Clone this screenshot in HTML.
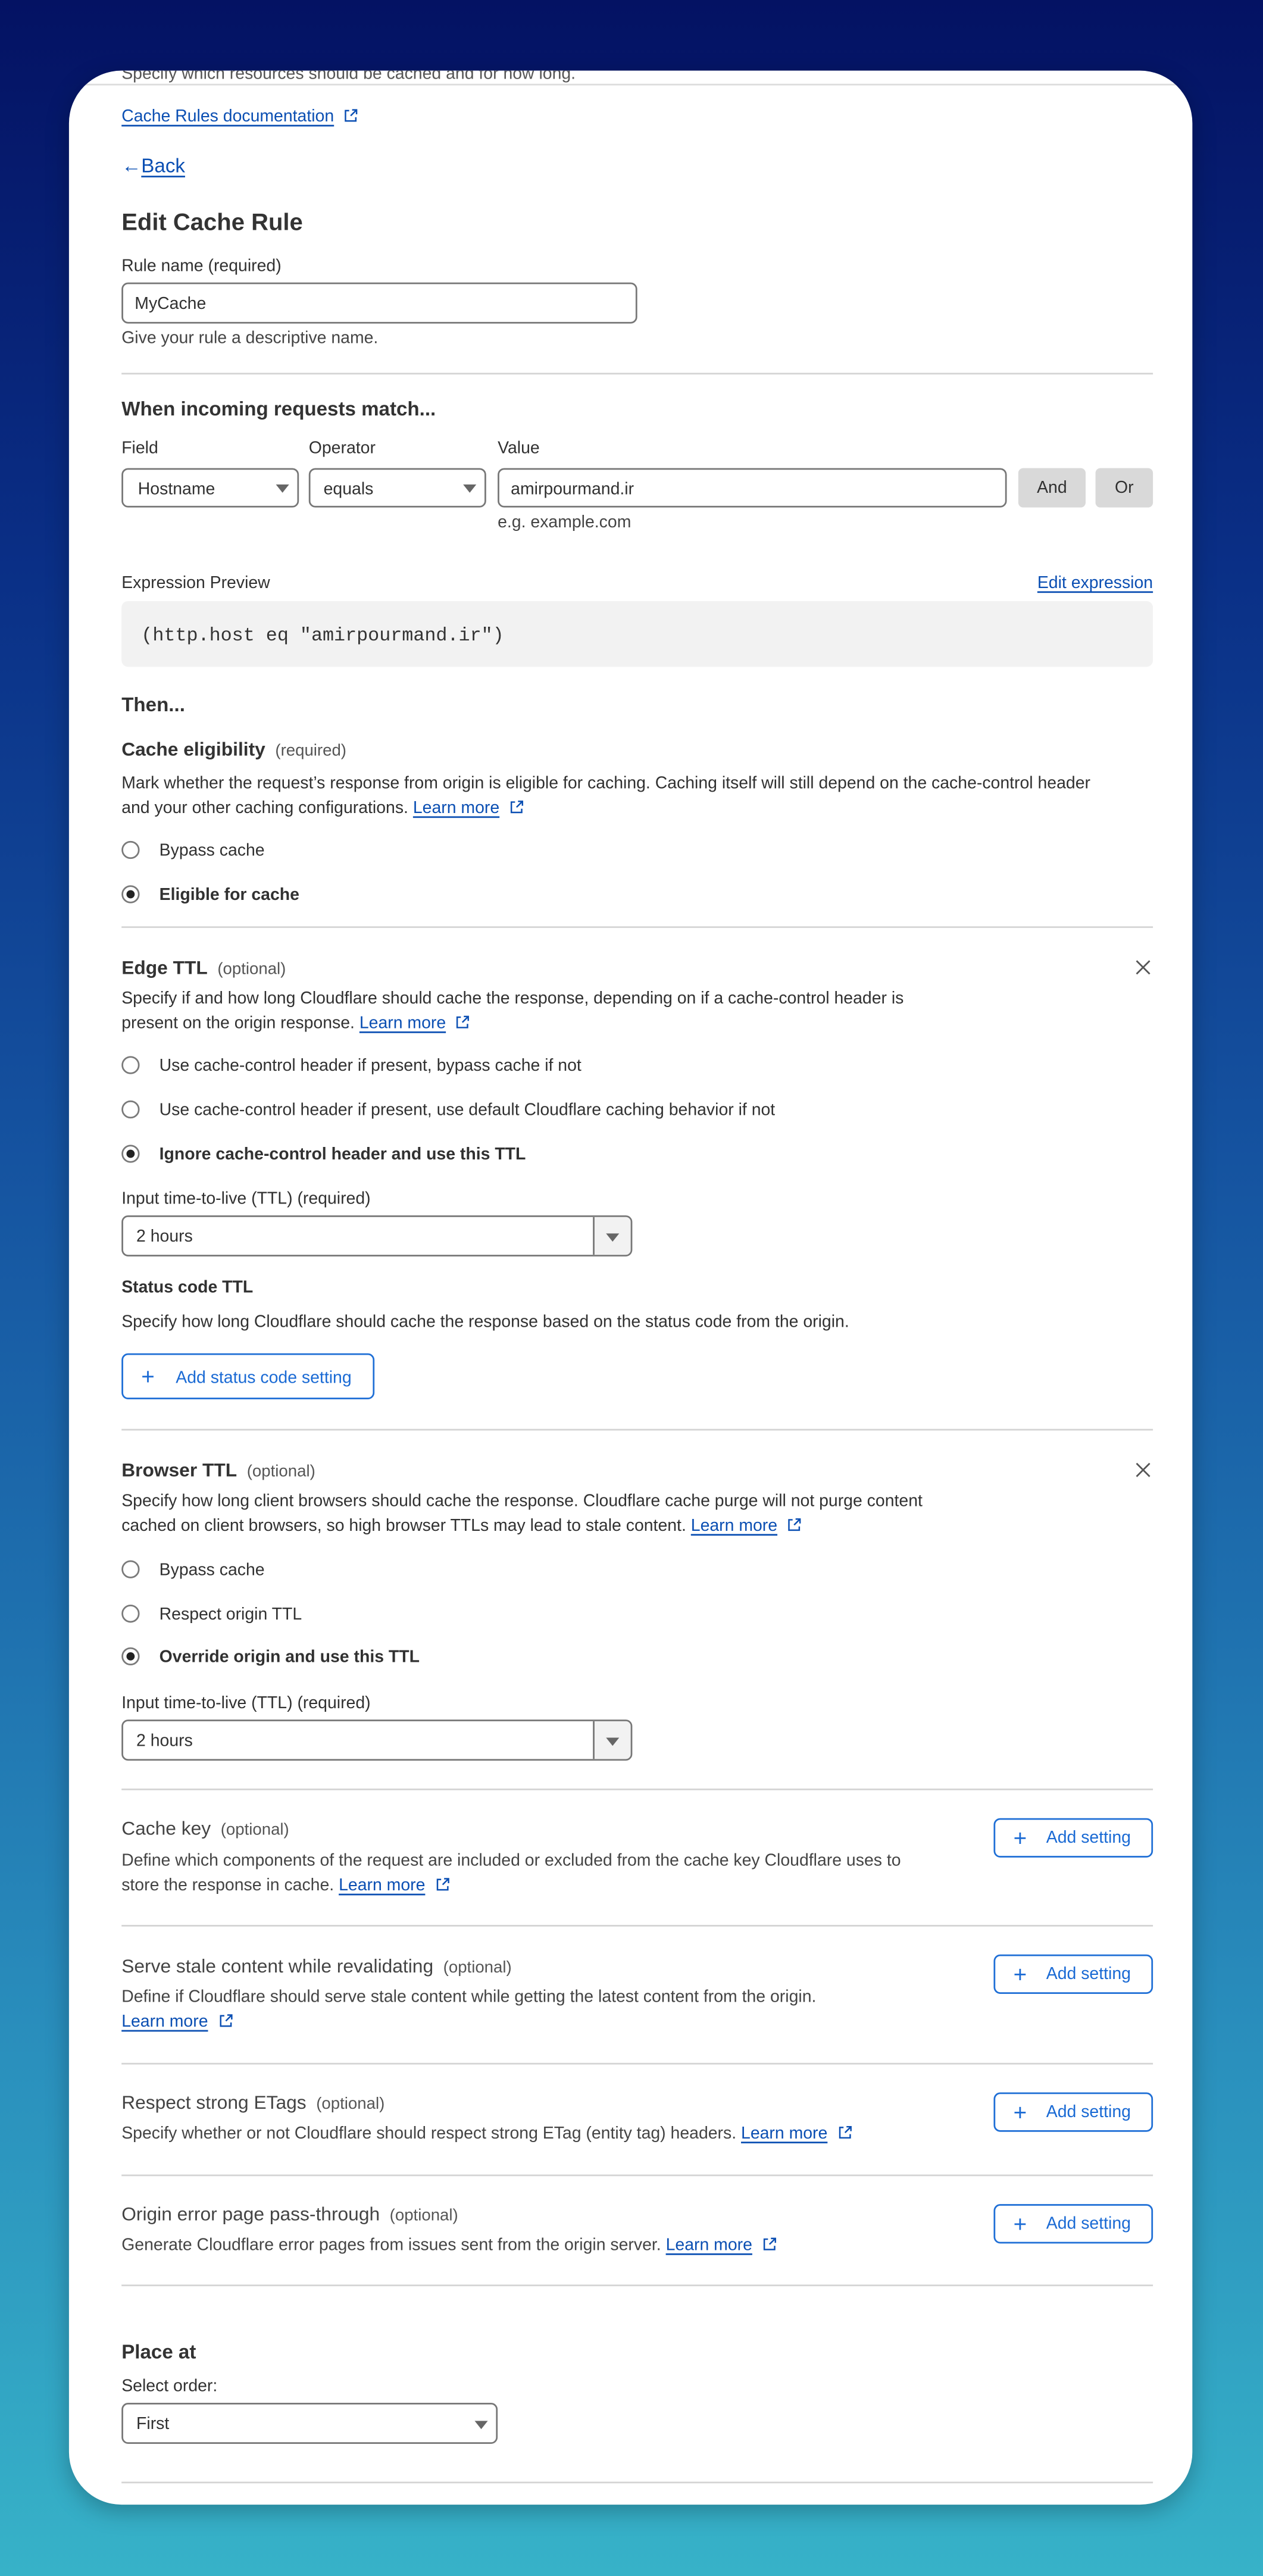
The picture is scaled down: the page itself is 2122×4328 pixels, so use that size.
<!DOCTYPE html>
<html><head><meta charset="utf-8"><style>
*{margin:0;padding:0;box-sizing:border-box}
html,body{width:2122px;height:4328px;overflow:hidden}
body{background:linear-gradient(180deg,#041263 0%,#0a2f86 22%,#1553a0 45%,#1e6fae 62%,#2a90bd 80%,#37b2c8 100%);font-family:"Liberation Sans",sans-serif;color:#313131}
#s{position:absolute;left:0;top:0;width:769px;height:1568.5px;transform:scale(2.75943);transform-origin:0 0}
.card{position:absolute;left:42px;top:43px;width:684px;height:1482px;background:#fff;border-radius:32px;box-shadow:0 4px 14px rgba(0,0,0,.25);overflow:hidden}
.a{position:absolute;white-space:nowrap;line-height:16px;height:16px;margin-top:2px}
.t{font-size:10.3px}
.lnk{color:#0b4fb3;text-decoration:underline;text-underline-offset:2px}
.h{font-size:12px;font-weight:bold;color:#333}
.opt{font-size:10px;font-weight:normal;color:#555;margin-left:6px}
.hr{position:absolute;left:32px;width:628px;height:1px;background:#d4d4d4}
.box{position:absolute;border:1px solid #777;border-radius:4px;background:#fff}
.val{position:absolute;font-size:10.3px;line-height:16px;top:50%;margin-top:-6.5px}
.arr{position:absolute;width:0;height:0;border-left:4px solid transparent;border-right:4px solid transparent;border-top:5px solid #666;top:50%;margin-top:-2px}
.rd{position:absolute;width:11px;height:11px;border:1px solid #7a7a7a;border-radius:50%;background:#fff}
.rd.on::after{content:"";position:absolute;left:2px;top:2px;width:5px;height:5px;border-radius:50%;background:#222}
.btn{position:absolute;border:1px solid #1f6fd6;border-radius:4px;color:#1a6ad4;font-size:10.3px}
.x{position:absolute;width:10px;height:10px}
.ext{display:inline-block;width:9px;height:9px;vertical-align:-1px;margin-left:6px}
</style></head><body><div id="s">
<div class="card">
<div style="position:absolute;left:0;top:0;width:684px;height:20px;overflow:hidden">
 <div class="a t" style="left:32px;top:-5px;color:#555;margin-top:0">Specify which resources should be cached and for how long.</div>
</div>
<div class="hr" style="top:8px;left:0;width:684px;background:#ddd"></div>

<div class="a t" style="left:32px;top:19px"><span class="lnk">Cache Rules documentation</span><svg class="ext" viewBox="0 0 10 10" fill="none" stroke="#0b4fb3" stroke-width="1"><path d="M4 1.5H1.5v7h7V6M6 1h3v3M9 1L5 5"/></svg></div>
<div class="a" style="left:32px;top:48px;font-size:12px;color:#0b4fb3">←<span style="text-decoration:underline;text-underline-offset:2px">Back</span></div>
<div class="a" style="left:32px;top:83px;font-size:14.5px;font-weight:bold;color:#333">Edit Cache Rule</div>
<div class="a t" style="left:32px;top:110px">Rule name (required)</div>
<div class="box" style="left:32px;top:129px;width:314px;height:25px"><div class="val" style="left:7px">MyCache</div></div>
<div class="a t" style="left:32px;top:154px;color:#444">Give your rule a descriptive name.</div>
<div class="hr" style="top:184px"></div>

<div class="a h" style="left:32px;top:196px">When incoming requests match...</div>
<div class="a t" style="left:32px;top:221px">Field</div>
<div class="a t" style="left:146px;top:221px">Operator</div>
<div class="a t" style="left:261px;top:221px">Value</div>
<div class="box" style="left:32px;top:242px;width:108px;height:24px"><div class="val" style="left:9px">Hostname</div><div class="arr" style="right:5px"></div></div>
<div class="box" style="left:146px;top:242px;width:108px;height:24px"><div class="val" style="left:8px">equals</div><div class="arr" style="right:5px"></div></div>
<div class="box" style="left:261px;top:242px;width:310px;height:24px"><div class="val" style="left:7px">amirpourmand.ir</div></div>
<div style="position:absolute;left:578px;top:242px;width:41px;height:24px;background:#d9d9d9;border-radius:3px;font-size:10.3px;text-align:center;line-height:26px">And</div>
<div style="position:absolute;left:625px;top:242px;width:35px;height:24px;background:#d9d9d9;border-radius:3px;font-size:10.3px;text-align:center;line-height:26px">Or</div>
<div class="a t" style="left:261px;top:266px;color:#444">e.g. example.com</div>

<div class="a t" style="left:32px;top:303px">Expression Preview</div>
<div class="a t" style="right:24px;top:303px"><span class="lnk">Edit expression</span></div>
<div style="position:absolute;left:32px;top:323px;width:628px;height:40px;background:#f2f2f2;border-radius:4px"></div>
<div class="a" style="left:44px;top:335px;font-family:'Liberation Mono',monospace;font-size:11.5px;color:#333">(http.host eq "amirpourmand.ir")</div>

<div class="a h" style="left:32px;top:376px">Then...</div>
<div class="a h" style="left:32px;top:404px;font-size:11.5px">Cache eligibility<span class="opt">(required)</span></div>
<div class="a t" style="left:32px;top:425px">Mark whether the request’s response from origin is eligible for caching. Caching itself will still depend on the cache-control header</div>
<div class="a t" style="left:32px;top:440px">and your other caching configurations. <span class="lnk">Learn more</span><svg class="ext" viewBox="0 0 10 10" fill="none" stroke="#0b4fb3" stroke-width="1"><path d="M4 1.5H1.5v7h7V6M6 1h3v3M9 1L5 5"/></svg></div>
<div class="rd" style="left:32px;top:469px"></div><div class="a t" style="left:55px;top:466px">Bypass cache</div>
<div class="rd on" style="left:32px;top:496px"></div><div class="a t" style="left:55px;top:493px;font-weight:bold">Eligible for cache</div>
<div class="hr" style="top:521px"></div>

<div class="a h" style="left:32px;top:537px;font-size:11.5px">Edge TTL<span class="opt">(optional)</span></div>
<svg class="x" style="left:649px;top:541px" viewBox="0 0 10 10" stroke="#555" stroke-width="1"><path d="M1 1L9 9M9 1L1 9"/></svg>
<div class="a t" style="left:32px;top:556px">Specify if and how long Cloudflare should cache the response, depending on if a cache-control header is</div>
<div class="a t" style="left:32px;top:571px">present on the origin response. <span class="lnk">Learn more</span><svg class="ext" viewBox="0 0 10 10" fill="none" stroke="#0b4fb3" stroke-width="1"><path d="M4 1.5H1.5v7h7V6M6 1h3v3M9 1L5 5"/></svg></div>
<div class="rd" style="left:32px;top:600px"></div><div class="a t" style="left:55px;top:597px">Use cache-control header if present, bypass cache if not</div>
<div class="rd" style="left:32px;top:627px"></div><div class="a t" style="left:55px;top:624px">Use cache-control header if present, use default Cloudflare caching behavior if not</div>
<div class="rd on" style="left:32px;top:654px"></div><div class="a t" style="left:55px;top:651px;font-weight:bold">Ignore cache-control header and use this TTL</div>
<div class="a t" style="left:32px;top:678px">Input time-to-live (TTL) (required)</div>
<div class="box" style="left:32px;top:697px;width:311px;height:25px;overflow:hidden"><div class="val" style="left:8px">2 hours</div><div style="position:absolute;right:0;top:0;width:23px;height:100%;background:#f2f2f2;border-left:1px solid #777"></div><div class="arr" style="right:7px"></div></div>
<div class="a t" style="left:32px;top:732px;font-weight:bold">Status code TTL</div>
<div class="a t" style="left:32px;top:753px">Specify how long Cloudflare should cache the response based on the status code from the origin.</div>
<div class="btn" style="left:32px;top:781px;width:154px;height:28px"><span style="position:absolute;left:11px;top:6px;font-size:14px;line-height:14px;font-weight:300">+</span><span style="position:absolute;left:32px;top:7px;line-height:16px">Add status code setting</span></div>
<div class="hr" style="top:827px"></div>

<div class="a h" style="left:32px;top:843px;font-size:11.5px">Browser TTL<span class="opt">(optional)</span></div>
<svg class="x" style="left:649px;top:847px" viewBox="0 0 10 10" stroke="#555" stroke-width="1"><path d="M1 1L9 9M9 1L1 9"/></svg>
<div class="a t" style="left:32px;top:862px">Specify how long client browsers should cache the response. Cloudflare cache purge will not purge content</div>
<div class="a t" style="left:32px;top:877px">cached on client browsers, so high browser TTLs may lead to stale content. <span class="lnk">Learn more</span><svg class="ext" viewBox="0 0 10 10" fill="none" stroke="#0b4fb3" stroke-width="1"><path d="M4 1.5H1.5v7h7V6M6 1h3v3M9 1L5 5"/></svg></div>
<div class="rd" style="left:32px;top:907px"></div><div class="a t" style="left:55px;top:904px">Bypass cache</div>
<div class="rd" style="left:32px;top:934px"></div><div class="a t" style="left:55px;top:931px">Respect origin TTL</div>
<div class="rd on" style="left:32px;top:960px"></div><div class="a t" style="left:55px;top:957px;font-weight:bold">Override origin and use this TTL</div>
<div class="a t" style="left:32px;top:985px">Input time-to-live (TTL) (required)</div>
<div class="box" style="left:32px;top:1004px;width:311px;height:25px;overflow:hidden"><div class="val" style="left:8px">2 hours</div><div style="position:absolute;right:0;top:0;width:23px;height:100%;background:#f2f2f2;border-left:1px solid #777"></div><div class="arr" style="right:7px"></div></div>
<div class="hr" style="top:1046px"></div>

<div class="a h" style="left:32px;top:1061px;font-size:11.5px;font-weight:normal;color:#444">Cache key<span class="opt">(optional)</span></div>
<div class="a t" style="left:32px;top:1081px;color:#444">Define which components of the request are included or excluded from the cache key Cloudflare uses to</div>
<div class="a t" style="left:32px;top:1096px;color:#444">store the response in cache. <span class="lnk">Learn more</span><svg class="ext" viewBox="0 0 10 10" fill="none" stroke="#0b4fb3" stroke-width="1"><path d="M4 1.5H1.5v7h7V6M6 1h3v3M9 1L5 5"/></svg></div>
<div class="btn" style="left:563px;top:1064px;width:97px;height:24px"><span style="position:absolute;left:11px;top:4px;font-size:14px;line-height:14px">+</span><span style="position:absolute;left:31px;top:4px;line-height:16px">Add setting</span></div>
<div class="hr" style="top:1129px"></div>

<div class="a h" style="left:32px;top:1145px;font-size:11.5px;font-weight:normal;color:#444">Serve stale content while revalidating<span class="opt">(optional)</span></div>
<div class="a t" style="left:32px;top:1164px;color:#444">Define if Cloudflare should serve stale content while getting the latest content from the origin.</div>
<div class="a t" style="left:32px;top:1179px"><span class="lnk">Learn more</span><svg class="ext" viewBox="0 0 10 10" fill="none" stroke="#0b4fb3" stroke-width="1"><path d="M4 1.5H1.5v7h7V6M6 1h3v3M9 1L5 5"/></svg></div>
<div class="btn" style="left:563px;top:1147px;width:97px;height:24px"><span style="position:absolute;left:11px;top:4px;font-size:14px;line-height:14px">+</span><span style="position:absolute;left:31px;top:4px;line-height:16px">Add setting</span></div>
<div class="hr" style="top:1213px"></div>

<div class="a h" style="left:32px;top:1228px;font-size:11.5px;font-weight:normal;color:#444">Respect strong ETags<span class="opt">(optional)</span></div>
<div class="a t" style="left:32px;top:1247px;color:#444">Specify whether or not Cloudflare should respect strong ETag (entity tag) headers. <span class="lnk">Learn more</span><svg class="ext" viewBox="0 0 10 10" fill="none" stroke="#0b4fb3" stroke-width="1"><path d="M4 1.5H1.5v7h7V6M6 1h3v3M9 1L5 5"/></svg></div>
<div class="btn" style="left:563px;top:1231px;width:97px;height:24px"><span style="position:absolute;left:11px;top:4px;font-size:14px;line-height:14px">+</span><span style="position:absolute;left:31px;top:4px;line-height:16px">Add setting</span></div>
<div class="hr" style="top:1281px"></div>

<div class="a h" style="left:32px;top:1296px;font-size:11.5px;font-weight:normal;color:#444">Origin error page pass-through<span class="opt">(optional)</span></div>
<div class="a t" style="left:32px;top:1315px;color:#444">Generate Cloudflare error pages from issues sent from the origin server. <span class="lnk">Learn more</span><svg class="ext" viewBox="0 0 10 10" fill="none" stroke="#0b4fb3" stroke-width="1"><path d="M4 1.5H1.5v7h7V6M6 1h3v3M9 1L5 5"/></svg></div>
<div class="btn" style="left:563px;top:1299px;width:97px;height:24px"><span style="position:absolute;left:11px;top:4px;font-size:14px;line-height:14px">+</span><span style="position:absolute;left:31px;top:4px;line-height:16px">Add setting</span></div>
<div class="hr" style="top:1348px"></div>

<div class="a h" style="left:32px;top:1379px">Place at</div>
<div class="a t" style="left:32px;top:1401px">Select order:</div>
<div class="box" style="left:32px;top:1420px;width:229px;height:25px"><div class="val" style="left:8px">First</div><div class="arr" style="right:5px"></div></div>
<div class="hr" style="top:1468px"></div>
</div>
</div></body></html>
